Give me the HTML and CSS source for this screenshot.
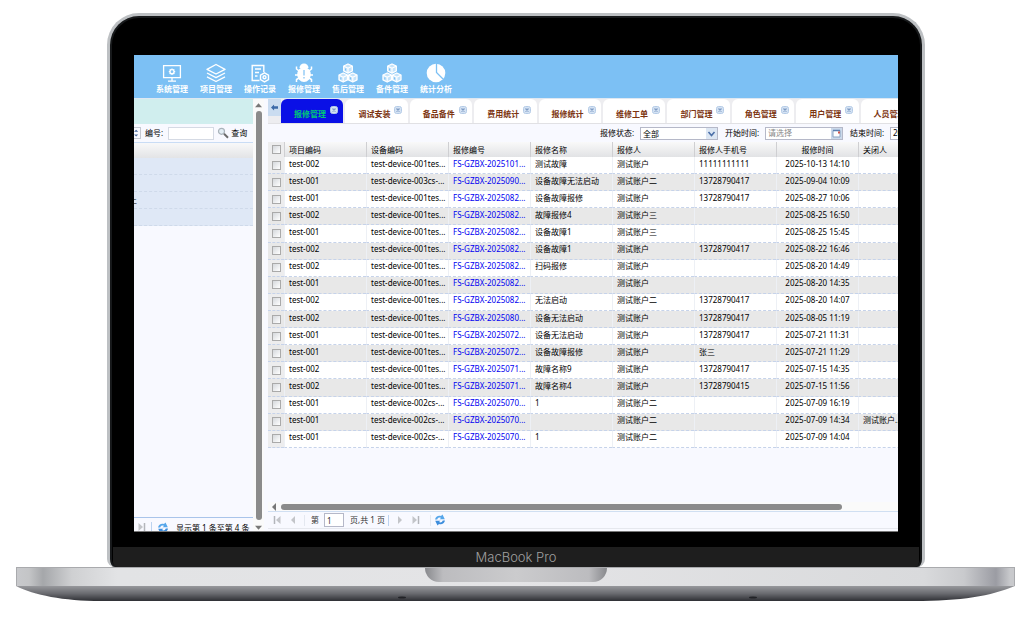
FILE: index.html
```html
<!DOCTYPE html>
<html lang="zh-CN">
<head>
<meta charset="utf-8">
<title>报修管理</title>
<link rel="stylesheet" href="styles.css">
</head>
<body>
<svg class="defs" aria-hidden="true">
  <defs>
    <symbol id="close" viewBox="0 0 8 8"><rect x="0.5" y="0.5" width="7" height="7" rx="2" fill="#d5e3f4" stroke="#b4cbe6"/><path d="M2.500 2.500l3 3M5.500 2.500l-3 3" stroke="#7f9cc4" stroke-width="1.300"/></symbol>
    <symbol id="refresh" viewBox="0 0 12 12"><path d="M1 5.500C1.500 2.500 4.500 1 7 2L8.500.5l2.300 4.800H5.600L7 3.900C5.300 3.200 3.800 3.800 3.200 5.500z" fill="#55a6ea"/><path d="M11 6.500C10.500 9.500 7.500 11 5 10L3.500 11.500 1.200 6.700h5.200L5 8.100c1.700.7 3.200.1 3.800-1.600z" fill="#3c8ddc"/></symbol>
    <symbol id="next" viewBox="0 0 10 10"><path d="M3 1l4 4-4 4z" fill="#c3c5c9"/></symbol>
    <symbol id="last" viewBox="0 0 10 10"><path d="M1.500 1l4.500 4-4.500 4z" fill="#c3c5c9"/><path d="M7.500 1v8" stroke="#b3b5ba" stroke-width="1.500"/></symbol>
    <symbol id="boxes" viewBox="0 0 20 20"><g fill="#fff" fill-opacity=".55" stroke="#fff" stroke-width="1.300" stroke-linejoin="round"><path d="M10 1l4.300 2v5L10 10.200 5.700 8V3zM5.200 10l4.300 2v4.800l-4.300 2.200L1 16.800V12zM14.800 10l4.200 2v4.800l-4.200 2.200-4.300-2.200V12z"/></g><path d="M6 3.200l4 2 4-2M10 5.200v4.500M1.300 12.300l3.900 2 4-2M5.200 14.300v4M10.800 12.300l4 2 3.900-2M14.800 14.300v4" fill="none" stroke="#fff" stroke-width="1.200"/><path d="M7.500 5.500v2M2.800 14.400v2M12.500 14.400v2" stroke="#7cc0f4" stroke-width="1"/></symbol>
  </defs>
</svg>
<div class="laptop">
  <div class="lid">
    <div class="screen">
      <nav class="topnav">
        <a href="#"><svg viewBox="0 0 20 20"><g fill="none" stroke="#fff" stroke-width="1.300"><path d="M1.600 2.700h16.800v12H1.600zM10 15v3M6 18.200h8"/><circle cx="10" cy="8.700" r="2"/><path d="M10 5.500v1.200M10 10.700v1.200M6.800 8.700H8M12 8.700h1.200M7.700 6.400l.9.900M11.400 10.100l.9.900M12.300 6.400l-.9.900M8.600 10.100l-.9.900"/></g></svg>系统管理</a>
        <a href="#"><svg viewBox="0 0 20 20"><g fill="none" stroke="#fff" stroke-width="1.400" stroke-linejoin="round"><path d="M10 1.500L19 6.300 10 11 1 6.300zM1 10l9 4.700L19 10M1 13.800l9 4.700 9-4.700"/></g></svg>项目管理</a>
        <a href="#"><svg viewBox="0 0 20 20"><g fill="none" stroke="#fff" stroke-width="1.400"><path d="M9.500 17.500H2.200v-15h11.600v6.500M5 6h6M5 9.500h4M5 13h2.500"/><path d="M14.500 9.800l4 2.300v4.500l-4 2.300-4-2.300v-4.500z"/><circle cx="14.500" cy="14.300" r="1.500"/></g></svg>操作记录</a>
        <a href="#"><svg viewBox="0 0 20 20"><path d="M5.500 5a4.500 4.500 0 0 1 9 0z" fill="#fff"/><ellipse cx="10" cy="11.500" rx="6.800" ry="7.500" fill="#fff"/><g fill="none" stroke="#fff" stroke-width="1.500"><path d="M5 8L2.500 6V3.500M15 8l2.500-2V3.500M4.500 12H1M15.500 12H19M5 15l-2.500 1.500V19M15 15l2.500 1.500V19"/></g><path d="M10 7v5.500M10 14v1.500" stroke="#7cc0f4" stroke-width="1.200"/></svg>报修管理</a>
        <a href="#"><svg><use href="#boxes"/></svg>售后管理</a>
        <a href="#"><svg><use href="#boxes"/></svg>备件管理</a>
        <a href="#"><svg viewBox="0 0 20 20"><circle cx="10" cy="10" r="9.300" fill="#fff"/><path d="M10.500 0v9.500l6.500 6.500" fill="none" stroke="#7cc0f4" stroke-width="1.300"/></svg>统计分析</a>
      </nav>
      <div class="work">
        <aside class="side">
          <div class="side-main">
            <div class="banner"></div>
            <form class="side-query">
              <span class="combo-end"><svg viewBox="0 0 7 12"><path d="M0 4.500L2.500 2 5 4.500zM0 7.500L2.500 10 5 7.500z" fill="#4a6a9c"/></svg></span>
              <label for="code">编号:</label><input id="code" type="text">
              <button type="button"><svg viewBox="0 0 12 12"><circle cx="4.500" cy="4.300" r="3" fill="#e3eef5" stroke="#a9b3ba" stroke-width="1.200"/><path d="M7 6.700l4 4" stroke="#6b6b6b" stroke-width="2"/></svg>查询</button>
            </form>
            <div class="side-head"></div>
            <ul class="side-list"><li></li><li></li><li><span>上</span></li><li></li></ul>
            <footer class="side-foot">
              <button type="button" aria-label="末页"><svg><use href="#last"/></svg></button>
              <i></i>
              <button type="button" aria-label="刷新"><svg class="big"><use href="#refresh"/></svg></button>
              <span>显示第 1 条至第 4 条</span>
            </footer>
          </div>
          <div class="vscroll"><svg viewBox="0 0 8 6"><path d="M0 5.500L4 1l4 4.500z" fill="#777"/></svg><b></b><svg viewBox="0 0 8 6"><path d="M0 .5L4 5 8 .5z" fill="#777"/></svg></div>
        </aside>
        <main class="main">
          <div class="tabbar">
            <button class="tab-left" type="button" aria-label="向左"><svg viewBox="0 0 8 8"><path d="M0 4l3.500-3.500v2H8v3H3.500v2z" fill="#3b69a8"/></svg></button>
            <div class="tabs">
              <a class="on" href="#">报修管理<svg><use href="#close"/></svg></a>
              <a href="#">调试安装<svg><use href="#close"/></svg></a>
              <a href="#">备品备件<svg><use href="#close"/></svg></a>
              <a href="#">费用统计<svg><use href="#close"/></svg></a>
              <a href="#">报修统计<svg><use href="#close"/></svg></a>
              <a href="#">维修工单<svg><use href="#close"/></svg></a>
              <a href="#">部门管理<svg><use href="#close"/></svg></a>
              <a href="#">角色管理<svg><use href="#close"/></svg></a>
              <a href="#">用户管理<svg><use href="#close"/></svg></a>
              <a href="#">人员管理<svg><use href="#close"/></svg></a>
            </div>
          </div>
          <form class="filters">
            <label for="state">报修状态:</label>
            <span class="field state"><select id="state"><option>全部</option></select><svg viewBox="0 0 11 11"><rect width="11" height="11" fill="#dce6f3"/><path d="M2.500 4l3 3.500 3-3.500" fill="none" stroke="#4b6fa8" stroke-width="1.600"/></svg></span>
            <label for="from">开始时间:</label>
            <span class="field date"><input id="from" type="text" placeholder="请选择"><svg viewBox="0 0 11 11"><rect width="11" height="11" fill="#cbd9ea"/><path d="M2 2.500h7v6.500H2z" fill="#fff" stroke="#8ba3c2"/><path d="M2 2.500h7" stroke="#5b7fb0" stroke-width="1.500"/><path d="M7 3.500h2v2H7z" fill="#d0544b"/></svg></span>
            <label for="to">结束时间:</label>
            <span class="field date"><input id="to" type="text" value="2025-10-13"></span>
          </form>
          <div class="grid">
            <table>
              <colgroup><col class="c-check"><col><col><col><col><col><col><col><col></colgroup>
              <thead><tr><th><input type="checkbox" aria-label="全选"></th><th>项目编码</th><th>设备编码</th><th>报修编号</th><th>报修名称</th><th>报修人</th><th>报修人手机号</th><th class="t">报修时间</th><th>关闭人</th></tr></thead>
              <tbody>
<tr><td><input type="checkbox" aria-label="选择"></td><td>test-002</td><td>test-device-001tes...</td><td><a href="#">FS-GZBX-2025101...</a></td><td>测试故障</td><td>测试账户</td><td>11111111111</td><td class="t">2025-10-13 14:10</td><td></td></tr>
<tr><td><input type="checkbox" aria-label="选择"></td><td>test-001</td><td>test-device-003cs-...</td><td><a href="#">FS-GZBX-2025090...</a></td><td>设备故障无法启动</td><td>测试账户二</td><td>13728790417</td><td class="t">2025-09-04 10:09</td><td></td></tr>
<tr><td><input type="checkbox" aria-label="选择"></td><td>test-001</td><td>test-device-001tes...</td><td><a href="#">FS-GZBX-2025082...</a></td><td>设备故障报修</td><td>测试账户</td><td>13728790417</td><td class="t">2025-08-27 10:06</td><td></td></tr>
<tr><td><input type="checkbox" aria-label="选择"></td><td>test-002</td><td>test-device-001tes...</td><td><a href="#">FS-GZBX-2025082...</a></td><td>故障报修4</td><td>测试账户三</td><td></td><td class="t">2025-08-25 16:50</td><td></td></tr>
<tr><td><input type="checkbox" aria-label="选择"></td><td>test-001</td><td>test-device-001tes...</td><td><a href="#">FS-GZBX-2025082...</a></td><td>设备故障1</td><td>测试账户三</td><td></td><td class="t">2025-08-25 15:45</td><td></td></tr>
<tr><td><input type="checkbox" aria-label="选择"></td><td>test-002</td><td>test-device-001tes...</td><td><a href="#">FS-GZBX-2025082...</a></td><td>设备故障1</td><td>测试账户</td><td>13728790417</td><td class="t">2025-08-22 16:46</td><td></td></tr>
<tr><td><input type="checkbox" aria-label="选择"></td><td>test-002</td><td>test-device-001tes...</td><td><a href="#">FS-GZBX-2025082...</a></td><td>扫码报修</td><td>测试账户</td><td></td><td class="t">2025-08-20 14:49</td><td></td></tr>
<tr><td><input type="checkbox" aria-label="选择"></td><td>test-001</td><td>test-device-001tes...</td><td><a href="#">FS-GZBX-2025082...</a></td><td></td><td>测试账户</td><td></td><td class="t">2025-08-20 14:35</td><td></td></tr>
<tr><td><input type="checkbox" aria-label="选择"></td><td>test-002</td><td>test-device-001tes...</td><td><a href="#">FS-GZBX-2025082...</a></td><td>无法启动</td><td>测试账户二</td><td>13728790417</td><td class="t">2025-08-20 14:07</td><td></td></tr>
<tr><td><input type="checkbox" aria-label="选择"></td><td>test-002</td><td>test-device-001tes...</td><td><a href="#">FS-GZBX-2025080...</a></td><td>设备无法启动</td><td>测试账户</td><td>13728790417</td><td class="t">2025-08-05 11:19</td><td></td></tr>
<tr><td><input type="checkbox" aria-label="选择"></td><td>test-001</td><td>test-device-001tes...</td><td><a href="#">FS-GZBX-2025072...</a></td><td>设备无法启动</td><td>测试账户</td><td>13728790417</td><td class="t">2025-07-21 11:31</td><td></td></tr>
<tr><td><input type="checkbox" aria-label="选择"></td><td>test-001</td><td>test-device-001tes...</td><td><a href="#">FS-GZBX-2025072...</a></td><td>设备故障报修</td><td>测试账户</td><td>张三</td><td class="t">2025-07-21 11:29</td><td></td></tr>
<tr><td><input type="checkbox" aria-label="选择"></td><td>test-002</td><td>test-device-001tes...</td><td><a href="#">FS-GZBX-2025071...</a></td><td>故障名称9</td><td>测试账户</td><td>13728790417</td><td class="t">2025-07-15 14:35</td><td></td></tr>
<tr><td><input type="checkbox" aria-label="选择"></td><td>test-002</td><td>test-device-001tes...</td><td><a href="#">FS-GZBX-2025071...</a></td><td>故障名称4</td><td>测试账户</td><td>13728790415</td><td class="t">2025-07-15 11:56</td><td></td></tr>
<tr><td><input type="checkbox" aria-label="选择"></td><td>test-001</td><td>test-device-002cs-...</td><td><a href="#">FS-GZBX-2025070...</a></td><td>1</td><td>测试账户二</td><td></td><td class="t">2025-07-09 16:19</td><td></td></tr>
<tr><td><input type="checkbox" aria-label="选择"></td><td>test-001</td><td>test-device-002cs-...</td><td><a href="#">FS-GZBX-2025070...</a></td><td></td><td>测试账户二</td><td></td><td class="t">2025-07-09 14:34</td><td>测试账户...</td></tr>
<tr><td><input type="checkbox" aria-label="选择"></td><td>test-001</td><td>test-device-002cs-...</td><td><a href="#">FS-GZBX-2025070...</a></td><td>1</td><td>测试账户二</td><td></td><td class="t">2025-07-09 14:04</td><td></td></tr>
              </tbody>
            </table>
          </div>
          <div class="hscroll"><svg viewBox="0 0 6 8"><path d="M5 0L1 4l4 4z" fill="#777"/></svg><b></b></div>
          <footer class="pager">
            <button class="flip" type="button" aria-label="首页"><svg><use href="#last"/></svg></button>
            <button class="flip" type="button" aria-label="上一页"><svg><use href="#next"/></svg></button>
            <i class="pale start"></i>
            <label for="page">第</label><input id="page" type="text" value="1"><span>页,共 1 页</span>
            <i></i>
            <button type="button" aria-label="下一页"><svg><use href="#next"/></svg></button>
            <button type="button" aria-label="末页"><svg><use href="#last"/></svg></button>
            <i class="pale"></i>
            <button type="button" aria-label="刷新"><svg class="big"><use href="#refresh"/></svg></button>
          </footer>
        </main>
      </div>
    </div>
    <div class="chin">MacBook Pro</div>
  </div>
  <div class="base"><div class="notch"></div></div>
  <svg class="belly" viewBox="0 0 999 15" preserveAspectRatio="none">
    <defs><linearGradient id="metal" x1="0" y1="0" x2="0" y2="1"><stop offset="0" stop-color="#97989c"/><stop offset=".5" stop-color="#6a6b70"/><stop offset="1" stop-color="#2e2f34"/></linearGradient></defs>
    <path d="M0 0h999C975 10 945 15 898 15H85C47 15 18 9 0 0z" fill="url(#metal)"/>
    <ellipse cx="386" cy="11.500" rx="4" ry="1" fill="#222327"/><ellipse cx="737" cy="11.500" rx="4" ry="1" fill="#222327"/>
  </svg>
</div>
</body>
</html>
```

FILE: styles.css
```css
* { box-sizing: border-box; }
body {
  margin: 0;
  background: #fff;
  color: #000;
  font: 8px/12px "Noto Sans", "Noto Sans CJK SC", sans-serif;
}
a { color: inherit; text-decoration: none; }
button, input, select {
  margin: 0;
  padding: 0;
  border: 0;
  border-radius: 0;
  background: none;
  color: inherit;
  font: inherit;
  outline: 0;
}
svg { display: block; flex: none; }
.defs { position: absolute; width: 0; height: 0; }

/* Laptop frame */
.laptop {
  display: flex;
  flex-direction: column;
  height: 100vh;
  min-height: 560px;
  padding: 13px 14px 18px 16px;
}
.lid {
  display: flex;
  flex: 1;
  flex-direction: column;
  min-height: 0;
  margin: 0 90px 0 91px;
  padding: 39px 3px 0;
  border: 3px solid #bdc0c3;
  border-bottom: 0;
  border-radius: 32px 32px 8px 8px;
  background: #000;
  box-shadow: inset 0 0 0 2px #17191b;
}
.screen {
  display: flex;
  flex: 1;
  flex-direction: column;
  min-height: 0;
  margin: 0 21px;
  overflow: hidden;
  border-bottom: 1px solid #777;
  background: #f8f9ff;
}
.chin {
  margin-top: 15px;
  border-radius: 0 0 5px 5px;
  background: #1e1e1e;
  color: #a0a0a0;
  font: 300 13px/20px Inter, sans-serif;
  text-align: center;
}
.base {
  position: relative;
  height: 19px;
  border: 1px solid #a9aaad;
  border-width: 1px 1px 0;
  background: linear-gradient(90deg, #c8c9cc 0, #c4c5c7 12px, #a5a7aa 26px, #cfd0d2 55px, #e2e3e5 100px, #e4e4e6 50%, #d9dadc calc(100% - 90px), #c9cacd calc(100% - 50px), #9b9ca3 calc(100% - 18px), #c8c9cc calc(100% - 4px));
}
.notch {
  width: 182px;
  height: 14px;
  margin: 0 auto;
  border-radius: 0 0 16px 16px;
  background: linear-gradient(90deg, #88898d, #bcbcbf 18px, #cbcbcd 50%, #bcbcbf calc(100% - 18px), #88898d);
}
.belly { width: 100%; height: 15px; }

/* Top navigation */
.topnav {
  display: flex;
  height: 43px;
  padding: 8px 0 0 16px;
  background: #7cc0f4;
  color: #fff;
  font-weight: 700;
}
.topnav a {
  display: flex;
  flex-direction: column;
  align-items: center;
  width: 44px;
}
.topnav svg { width: 20px; height: 20px; }
.work {
  display: flex;
  flex: 1;
  min-height: 0;
  border-top: 1px solid #dfe8f2;
}

/* Side panel */
.side { display: flex; flex: none; width: 130px; background: #fff; }
.side-main {
  display: flex;
  flex: 1;
  flex-direction: column;
  min-width: 0;
  background: #f8f9ff;
}
.banner { height: 25px; background: #d0eeee; }
.side-query {
  display: flex;
  align-items: center;
  height: 19px;
  border-bottom: 1px solid #c9dcf5;
}
.combo-end { width: 7px; margin-right: 4px; border: 1px solid #c5c9d2; border-left: 0; }
.side-query input {
  width: 46px;
  height: 13px;
  margin: 0 3px 0 5px;
  border: 1px solid #d5dae4;
  background: #fff;
}
.side-query button { display: flex; align-items: center; gap: 2px; }
.side-query button svg { width: 12px; height: 12px; }
.side-query label { white-space: nowrap; }
.side-head { height: 15px; background: linear-gradient(#f8f8f9, #e3e4e6); }
.side-list { margin: 0; padding: 0; list-style: none; }
.side-list li {
  display: flex;
  align-items: center;
  height: 17px;
  border-bottom: 1px dashed #cfdaea;
  background: #dfe8f6;
  line-height: 8px;
}
.side-list span { display: flex; justify-content: flex-end; width: 3px; overflow: hidden; }
.side-foot {
  display: flex;
  align-items: flex-start;
  height: 14px;
  margin-top: auto;
  padding-top: 4px;
  overflow: hidden;
  border-top: 1px solid #a9c4ea;
  white-space: nowrap;
}
.side-foot svg { width: 10px; height: 10px; margin: 0 4px 0 3px; }
.side-foot .big { width: 12px; height: 12px; margin: 0 7px 0 5px; }
i { width: 1px; height: 11px; background: #bcd3f0; }
.vscroll {
  display: flex;
  flex-direction: column;
  align-items: center;
  width: 11px;
  padding: 3px 0 0;
  background: #fafafa;
}
.vscroll svg { width: 7px; height: 6px; }
.vscroll b { flex: 1; width: 6px; margin: 3px 0 5px; border-radius: 3px; background: #8b8b8b; }

/* Main panel */
.main { display: flex; flex: 1; flex-direction: column; min-width: 0; margin-left: 4px; }
.tabbar {
  display: flex;
  height: 25px;
  overflow: hidden;
  border-bottom: 1px solid #e1e1e4;
  background: #ededf0;
}
.tab-left {
  display: flex;
  flex: none;
  justify-content: center;
  width: 13px;
  height: 17px;
  padding-top: 5px;
  background: #cadcf0;
}
.tab-left svg { width: 7px; height: 7px; }
.tabs { display: grid; flex: none; grid-template-columns: repeat(10, 1fr); width: 644px; }
.tabs a {
  display: flex;
  gap: 4px;
  margin-right: 2px;
  padding: 9px 0 0 13px;
  border-radius: 6px 6px 0 0;
  background: #fff;
  color: #7c3410;
  font-weight: 700;
  white-space: nowrap;
}
.tabs .on { background: #0a10e6; color: #00c878; }
.tabs svg { width: 8px; height: 8px; margin-top: -2px; }
.filters {
  display: flex;
  flex: none;
  align-items: center;
  height: 18px;
  padding-left: 332px;
  overflow: hidden;
  white-space: nowrap;
}
.filters label { flex: none; width: 40px; }
.field { display: flex; flex: none; width: 78px; height: 13px; margin-right: 7px; border: 1px solid #b5b8c8; background: #fff; }
.field input, .field select { flex: 1; min-width: 0; padding: 0 2px; appearance: none; }
.field svg { width: 11px; height: 11px; }
.field ::placeholder { color: #888; opacity: 1; }

/* Data grid */
.grid { flex: 1; min-height: 0; overflow: hidden; }
table { width: 672px; height: 306px; border-spacing: 0; table-layout: fixed; }
.c-check { width: 16px; }
th, td { overflow: hidden; padding: 0 4px; text-align: left; white-space: nowrap; }
th {
  height: 15px;
  border-left: 1px solid #cfcfd2;
  background: linear-gradient(#f9f9f9, #e2e3e5);
  font-weight: 400;
}
td {
  height: 17px;
  padding-bottom: 3px;
  border-bottom: 1px dashed #c6d3ea;
  border-left: 1px solid #edf0f5;
  background: #fff;
  line-height: 10px;
}
tr:nth-child(even) td { background: #e8e8e8; }
tr > :first-child { padding: 0 3px 0 4px; border-left: 0; background: #ededee; }
td a { color: #0000f0; }
tr > .t { padding-left: 0; padding-right: 0; text-align: center; }
[type="checkbox"] {
  display: block;
  width: 9px;
  height: 9px;
  border: 1px solid #aaa;
  background: linear-gradient(135deg, #d5d8dc, #fff);
  appearance: none;
}
.hscroll {
  display: flex;
  align-items: center;
  gap: 4px;
  height: 9px;
  padding: 0 56px 0 3px;
  background: #fafafa;
}
.hscroll svg { width: 6px; height: 8px; }
.hscroll b { flex: 1; height: 6px; border-radius: 3px; background: #8b8b8b; }
.pager {
  display: flex;
  align-items: center;
  height: 18px;
  margin-bottom: 2px;
  padding-left: 4px;
  border-top: 1px solid #d0dff2;
  border-bottom: 1px solid #e6e8ee;
  color: #333;
  white-space: nowrap;
}
.pager svg { width: 10px; height: 10px; margin-right: 6px; }
.pager .big { width: 12px; height: 12px; margin: 0; }
.pager .flip svg { margin: 0 0 0 6px; }
.flip { transform: scaleX(-1); }
.pager i { margin: 0 6px 0 3px; }
.pager .pale { margin: 0 3px; background: #e4e8f0; }
.pager .start { margin: 0 6px 0 0; }
.pager input { width: 20px; height: 14px; margin: 0 6px 0 5px; padding: 0 2px; border: 1px solid #b5b8c8; background: #fff; }
```
